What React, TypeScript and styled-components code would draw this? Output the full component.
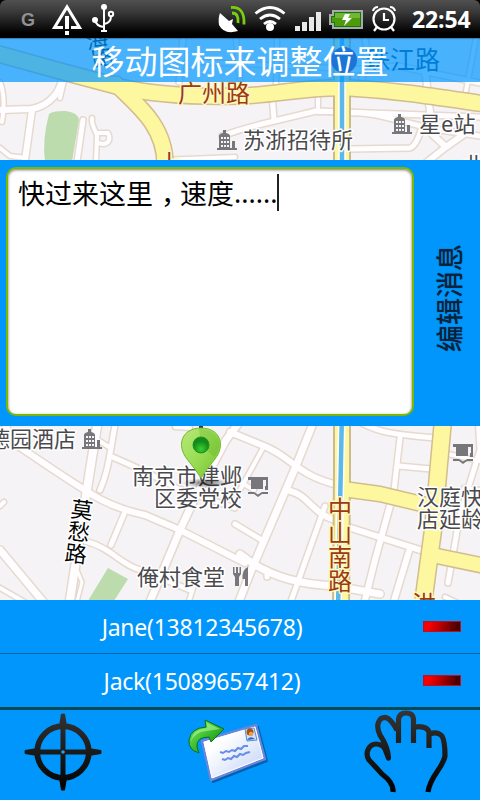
import React from 'react';
import styled, { createGlobalStyle } from 'styled-components';

const CJK = `"Noto Sans CJK SC", sans-serif`;
const LATIN = `"Noto Sans", "Noto Sans CJK SC", sans-serif`;

const GlobalStyle = createGlobalStyle`
  * { box-sizing: border-box; }
  body { margin: 0; background: #000; }
`;

const Screen = styled.div`
  display: flex;
  flex-direction: column;
  width: 480px;
  height: 800px;
  overflow: hidden;
  background: #000;
  font-family: ${LATIN};
`;

const StatusBar = styled.header`
  display: flex;
  align-items: center;
  flex: 0 0 38px;
  height: 38px;
  min-height: 0;
  border-radius: 6px 6px 0 0;
  background: linear-gradient(#505050 0, #3a3a3a 30%, #141414 68%, #000 88%);
`;

const Carrier = styled.span`
  width: 13px;
  margin-left: 21px;
  margin-right: 17px;
  padding-top: 2px;
  color: #929292;
  font: bold 18px/20px "Liberation Sans", sans-serif;
`;

const StatusIcon = styled.svg<{ $gap?: number }>`
  display: block;
  flex: none;
  margin-left: ${(p) => p.$gap ?? 0}px;
`;

const Clock = styled.time`
  margin-left: 15px;
  color: #fff;
  font: bold 23px/38px "Open Sans", sans-serif;
  letter-spacing: -0.1px;
`;

const Stage = styled.main`
  position: relative;
  display: flex;
  flex-direction: column;
  flex: 0 0 562px;
`;

const MapCanvas = styled.svg`
  position: absolute;
  inset: 0;
`;

const Title = styled.h1`
  position: relative;
  flex: 0 0 44px;
  height: 44px;
  margin: 0 0 78px;
  background: rgba(0, 150, 255, 0.7);
  box-shadow: inset 0 2px 1px -1px rgba(0, 30, 60, 0.35);
  color: #fff;
  font: 400 33px/44px ${CJK};
  text-align: center;
`;

const Composer = styled.section`
  position: relative;
  display: flex;
  flex: 0 0 266px;
  padding: 7px 0 10px 6px;
  background: #0096fb;
`;

const MessageBox = styled.div`
  display: flex;
  align-items: flex-start;
  width: 408px;
  padding: 5px 0 0 10px;
  border: 2px solid #7cb800;
  border-radius: 10px;
  background: #fff;
  box-shadow: inset 0 1px 3px rgba(0, 0, 0, 0.55);
  color: #000;
  font: 27px/37px ${CJK};
  white-space: nowrap;
`;

const CenteredComma = styled.span`
  width: 27px;
  text-indent: 8px;
  overflow: hidden;
`;

const Dots = styled.span`
  font-family: "Noto Sans", sans-serif;
`;

const Caret = styled.i`
  width: 2px;
  height: 37px;
  background: #222;
`;

const SideTab = styled.div`
  display: flex;
  align-items: center;
  justify-content: center;
  flex: 1;
  padding: 12px 0 0 4px;
`;

const SideLabel = styled.span`
  color: #07223a;
  font: 400 27px/34px ${CJK};
  text-shadow: 0 0 1px #07223a;
  writing-mode: vertical-rl;
  text-orientation: sideways;
  transform: rotate(180deg);
`;

const ContactList = styled.ul`
  flex: 0 0 107px;
  margin: 0;
  padding: 0;
  background: #0096fb;
  list-style: none;
`;

const ContactRow = styled.li`
  display: flex;
  align-items: center;
  height: 53px;
  padding-right: 19px;

  & + & {
    height: 54px;
    border-top: 1px solid #0664a5;
  }
`;

const ContactName = styled.span`
  width: 404px;
  color: #fff;
  font-size: 23px;
  line-height: 32px;
  letter-spacing: -0.25px;
  text-align: center;
`;

const RemoveButton = styled.button`
  width: 38px;
  height: 11px;
  margin-left: auto;
  padding: 0;
  border: 1px solid #b8102c;
  background: linear-gradient(105deg, #f80000 15%, #ba0000 45%, #4c0000 88%);
`;

const Toolbar = styled.nav`
  display: flex;
  justify-content: space-between;
  flex: 0 0 93px;
  border-top: 3px solid #034856;
  background: #0096fb;
`;

const ToolButton = styled.button`
  display: block;
  width: 130px;
  height: 90px;
  padding: 0;
  border: 0;
  background: none;
`;

const PlaceName = styled.text`
  fill: #4a4a4d;
  stroke: #fff;
  stroke-width: 3px;
  paint-order: stroke;
  stroke-linejoin: round;
  font: 22px ${CJK};
`;

const StreetName = styled(PlaceName)`
  fill: #9c3a12;
  stroke: #fff8c0;
  font-size: 24px;
`;

const MinorStreetName = styled(PlaceName)`
  fill: #050505;
  font-size: 22px;
`;

const VeiledName = styled(PlaceName)`
  fill: #00457c;
  stroke: none;
  font-size: 25px;
`;

type Road = { d: string; w?: number };

const lanes: Road[] = [
  // north of the message panel
  { d: 'M62 80 C58 98 44 107 31 109 L0 110' },
  { d: 'M32 110 L25 160' },
  { d: 'M0 82 C5 95 4 108 2 122', w: 4 },
  { d: 'M0 148 L10 156 L26 158', w: 4 },
  { d: 'M60 98 L66 72', w: 4 },
  { d: 'M83 120 L77 162', w: 5 },
  { d: 'M92 118 C91 126 96 130 97 136 L96 162 M97 133 L108 133 Q112 142 104 144 L97 143', w: 4 },
  { d: 'M183 38 L179 82', w: 5 },
  { d: 'M162 160 L235 157', w: 4 },
  { d: 'M222 136 Q238 130 262 124 L316 111 L480 117', w: 5 },
  { d: 'M272 94 L274 120', w: 5 },
  { d: 'M318 97 L318 112 L340 112', w: 4 },
  { d: 'M350 113 C375 111 405 124 440 130 L480 136', w: 5 },
  { d: 'M424 60 L430 112', w: 6 },
  { d: 'M350 149 L410 148 Q416 146 421 130 L430 117', w: 5 },
  { d: 'M432 134 L446 147 L470 130 M446 147 L427 162', w: 6 },
  { d: 'M365 38 C368 55 368 65 362 78', w: 5 },
  { d: 'M350 70 L398 66 L480 83', w: 5 },
  { d: 'M476 38 L466 91', w: 4 },
  { d: 'M200 62 L330 68 M236 40 L240 80 M277 40 L276 84', w: 4 },
  // south of the message panel
  { d: 'M0 415 L15 444 C35 457 60 475 88 492 Q112 508 145 515 L180 530 L245 563' },
  { d: 'M98 420 L87 489 L70 600', w: 8 },
  { d: 'M116 420 C110 450 109 470 100 490', w: 5 },
  { d: 'M98 440 L109 447', w: 4 },
  { d: 'M110 456 C136 467 152 474 176 488 L235 508', w: 5 },
  { d: 'M124 514 L111 545', w: 5 },
  { d: 'M85 541 C112 548 122 566 141 570 L190 590', w: 5 },
  { d: 'M244 416 L226 440 L194 500 L180 530 L149 604', w: 7 },
  { d: 'M0 550 L45 604', w: 7 },
  { d: 'M0 588 L28 604', w: 4 },
  { d: 'M0 506 L4 502', w: 4 },
  { d: 'M77 570 L82 582 L77 602', w: 3 },
  { d: 'M175 427 L190 428', w: 4 },
  { d: 'M188 604 L195 582', w: 4 },
  { d: 'M230 432 L264 446 C292 457 296 475 338 485', w: 6 },
  { d: 'M316 416 L296 466 L251 571 L238 604', w: 7 },
  { d: 'M264 446 L240 490 M240 482 L254 490', w: 4 },
  { d: 'M290 491 C308 495 313 514 335 520 L351 528 L420 550', w: 6 },
  { d: 'M325 506 L290 604', w: 5 },
  { d: 'M235 524 L260 539', w: 5 },
  { d: 'M240 554 L255 565 C275 576 295 584 335 586 L380 594', w: 7 },
  { d: 'M267 570 L267 577', w: 5 },
  { d: 'M352 418 C375 431 385 434 436 438', w: 5 },
  { d: 'M400 438 L394 490', w: 5 },
  { d: 'M399 466 L431 469', w: 5 },
  { d: 'M391 502 L375 560 L364 604', w: 6 },
  { d: 'M409 551 L393 604', w: 6 },
  { d: 'M448 454 L480 461', w: 4 },
  { d: 'M478 416 L480 450 L460 514 L448 583', w: 5 },
  { d: 'M464 488 L480 490', w: 4 },
  { d: 'M445 597 L460 604', w: 4 },
];

const avenues: Road[] = [
  { d: 'M-5 53 L60 71 L120 87 C155 95 200 97 240 96 C275 95 310 86 350 88 C400 91 430 96 485 104', w: 15 },
  { d: 'M116 84 C136 104 165 125 165 164', w: 15 },
  { d: 'M343 489 L380 494 L426 505', w: 14 },
  { d: 'M432 555 L485 566', w: 14 },
  { d: 'M443 420 L433 530 L423 604', w: 16 },
];

const Hotel = ({ x, y }: { x: number; y: number }) => (
  <g transform={`translate(${x} ${y})`}>
    <path d="M0 18h20v2H0z M2 6q0-2 4-3V0h3v3q4 1 4 3v13H2z M15 11h3v8h-3z" fill="#77777b" />
    <path d="M4 7h2v2H4z M7 7h2v2H7z M10 7h2v2h-2z M4 11h2v2H4z M7 11h2v2H7z M10 11h2v2h-2z M4 15h2v2H4z M7 15h2v2H7z M10 15h2v2h-2z" fill="#f7f4f8" />
  </g>
);

const School = ({ x, y }: { x: number; y: number }) => (
  <g transform={`translate(${x} ${y})`}>
    <path d="M0 0h20v3H0z M18 2h2v10h-2z M17 9h3v4h-3z M0 15h6l4 2.500 4-2.500h6v2h-6l-4 3-4-3H0z" fill="#77777b" />
    <path d="M3 3h12v9H3z" fill="#77777b" />
  </g>
);

const Fork = ({ x, y }: { x: number; y: number }) => (
  <path
    transform={`translate(${x} ${y})`}
    d="M0 0h1.500v6H3V0h2v6h1.500V0H8v7L6 10v9H2v-9L0 7z M15 0v19h-3v-7H9.500Q9 2 15 0z"
    fill="#77777b"
  />
);

const CityMap = () => (
  <MapCanvas width="480" height="562" viewBox="0 38 480 562">
    <defs>
      <linearGradient id="pin" x1="0" y1="0" x2="1" y2="1">
        <stop offset="0" stopColor="#b9e87a" />
        <stop offset="0.5" stopColor="#9add55" />
        <stop offset="1" stopColor="#74c02c" />
      </linearGradient>
      <radialGradient id="pinHole" cy="0.75">
        <stop offset="0" stopColor="#3ed02c" />
        <stop offset="1" stopColor="#128a1c" />
      </radialGradient>
      <radialGradient id="pinShade">
        <stop offset="0" stopColor="#000" stopOpacity="0.55" />
        <stop offset="1" stopColor="#000" stopOpacity="0" />
      </radialGradient>
    </defs>
    <rect y="38" width="480" height="562" fill="#f6f3f7" />
    <path d="M49 114 Q52 111 64 111 Q78 112 79 120 L72 162 H45 Q42 140 49 114z" fill="#bddcae" />
    <path d="M108 568 L128 579 L112 604 H86z" fill="#bddcae" />
    <path d="M0 585 Q15 592 25 602" fill="none" stroke="#86a4c4" strokeDasharray="1 1" />
    <g fill="none" strokeLinecap="round" strokeLinejoin="round">
      {lanes.map((r, i) => <path key={i} d={r.d} stroke="#e5dacd" strokeWidth={(r.w ?? 6) + 3} />)}
      {lanes.map((r, i) => <path key={i} d={r.d} stroke="#fffdff" strokeWidth={r.w ?? 6} />)}
      {avenues.map((r, i) => <path key={i} d={r.d} stroke="#d2bd8c" strokeWidth={(r.w ?? 14) + 3} />)}
      <path d="M342 30 V470 L341 610" stroke="#cdbb8e" strokeWidth="18" />
      {avenues.map((r, i) => <path key={i} d={r.d} stroke="#fdf7a0" strokeWidth={r.w} />)}
      <path d="M342 30 V470 L341 610" stroke="#fdf7a0" strokeWidth="14" />
      <path d="M342 30 V410 L338 610" stroke="#fff" strokeWidth="7.500" />
      <path d="M342 30 V410 L338 610" stroke="#5bb8e8" strokeWidth="4.500" />
    </g>
    <MinorStreetName x="86" y="48" transform="rotate(-8 97 40)">海</MinorStreetName>
    <MinorStreetName x="92" y="66" transform="rotate(-12 102 60)">路</MinorStreetName>
    <circle cx="344" cy="60" r="13" fill="#5b2a7c" />
    <VeiledName x="365" y="69">珠江路</VeiledName>
    <StreetName x="178" y="102">广州路</StreetName>
    <StreetName x="158" y="172">上</StreetName>
    <Hotel x={217} y={130} />
    <PlaceName x="243" y="148">苏浙招待所</PlaceName>
    <Hotel x={392} y={114} />
    <PlaceName x="419" y="132">星<tspan fontFamily="Noto Sans">e</tspan>站</PlaceName>
    <PlaceName x="463" y="173">北</PlaceName>
    <PlaceName x="-12" y="447">德园酒店</PlaceName>
    <Hotel x={82} y={429} />
    <PlaceName x="132" y="484">南京市建邺</PlaceName>
    <PlaceName x="154" y="506">区委党校</PlaceName>
    <School x={248} y={477} />
    <School x={453} y={444} />
    <PlaceName x="417" y="505">汉庭快捷</PlaceName>
    <PlaceName x="417" y="527">店延龄</PlaceName>
    <PlaceName x="137" y="585">俺村食堂</PlaceName>
    <Fork x={233} y={567} />
    <MinorStreetName x="71" y="518" transform="rotate(7 82 510)">莫</MinorStreetName>
    <MinorStreetName x="68" y="540" transform="rotate(7 79 532)">愁</MinorStreetName>
    <MinorStreetName x="65" y="562" transform="rotate(7 76 554)">路</MinorStreetName>
    {['中', '山', '南', '路'].map((c, i) => (
      <StreetName key={c} x="328" y={518 + i * 24}>{c}</StreetName>
    ))}
    <StreetName x="412" y="613">洪</StreetName>
    <ellipse cx="206" cy="483" rx="24" ry="5" fill="url(#pinShade)" />
    <rect x="199" y="426" width="4" height="3" fill="#333" />
    <path d="M201 478 Q196 470 187 459 C176 445 182 428 201 428 C220 428 226 445 215 459 Q206 470 201 478z" fill="url(#pin)" stroke="#6fba2c" />
    <path d="M199 429 L201 445 L214 457 C225 444 218 429 199 429z" fill="#55a81a" opacity="0.25" />
    <circle cx="201" cy="445" r="8" fill="url(#pinHole)" stroke="#1c9222" />
  </MapCanvas>
);

const TargetIcon = () => (
  <svg width="130" height="90" viewBox="0 710 130 90">
    <defs>
      <linearGradient id="ink" gradientUnits="userSpaceOnUse" x1="0" y1="710" x2="0" y2="792">
        <stop offset="0" stopColor="#363636" />
        <stop offset="1" stopColor="#000" />
      </linearGradient>
    </defs>
    <circle cx="63" cy="752" r="25.800" fill="none" stroke="url(#ink)" strokeWidth="5.800" />
    <path d="M60.500 726h5v52h-5z M37 749.500h52v5H37z" fill="url(#ink)" />
    <path d="M61 714q2-1 4 0l2 12h-8z M61 790q2 1 4 0l2-12h-8z M25 750q-1 2 0 4l12 2v-8z M101 750q1 2 0 4l-12 2v-8z" fill="url(#ink)" />
    <circle cx="63" cy="752" r="1.800" fill="#299ee5" />
  </svg>
);

const MailIcon = () => (
  <svg width="130" height="90" viewBox="175 710 130 90">
    <defs>
      <linearGradient id="paper" x1="0" y1="0" x2="1" y2="1">
        <stop offset="0.3" stopColor="#fff" />
        <stop offset="1" stopColor="#bbcef6" />
      </linearGradient>
      <linearGradient id="arrow" x1="0" y1="0" x2="1" y2="1">
        <stop offset="0" stopColor="#8df06d" />
        <stop offset="0.5" stopColor="#3bbb2d" />
        <stop offset="1" stopColor="#087812" />
      </linearGradient>
    </defs>
    <path d="M204 742 L258 727 L267 761 L213 782z" fill="#034a90" opacity="0.7" stroke="#034a90" strokeLinejoin="round" strokeWidth="2" />
    <path d="M202 741 L256 725 L265 759 L211 780z" fill="url(#paper)" stroke="#6787dc" strokeWidth="2.500" strokeLinejoin="round" />
    <path d="M204 742 L255 727 L263 758 L212 778z" fill="none" stroke="#fff" strokeWidth="1" />
    <path d="M245 729 l9-1 3 12-10 1z" fill="#d2e1fa" stroke="#5a88d4" />
    <circle cx="250" cy="732" r="3.500" fill="#a85412" />
    <circle cx="251" cy="734" r="2.200" fill="#f0a040" />
    <path d="M247 740 q3-5 8-1z" fill="#2364c4" />
    <path d="M220 752l3 1 3-2 3 1 3-2 3 1 3-3 3 1 3-3 4 0 M222 759l3 1 3-2 3 1 3-3 3 1 3-3 3 1 3-2 4-1" fill="none" stroke="#668de8" strokeWidth="2" />
    <path d="M205 720 L224 729 L211 742 L209 737 Q196 737 197 747 L199 753 Q188 750 189 740 Q191 728 206 727z" fill="url(#arrow)" stroke="#087018" strokeLinejoin="round" />
    <path d="M206.500 722.500 L220 729 L207 731 Q194 732 191 742 Q192 729 207 728z" fill="#a4f58d" opacity="0.65" />
  </svg>
);

const HandIcon = () => (
  <svg width="130" height="90" viewBox="350 710 130 90">
    <path
      d="M393 792 Q394 783 382 774 Q372 763 369 760 C364 752 370 744 376 744 Q382 744 385 749 L388.500 758 Q388 747 380 735 C375 725 379 717 386 717.500 Q391 719 397 730 M398.500 743 V720 Q399 713 406 713 Q413 713 413.500 719 V743 M413.500 728 C418 725 429 727 429 733 V748 M430 734 Q437 731 442 736 Q445 741 445 756 C443 768 430 776 428 792"
      fill="none"
      stroke="url(#ink)"
      strokeWidth="5.200"
      strokeLinejoin="round"
    />
  </svg>
);

const contacts = ['Jane(13812345678)', 'Jack(15089657412)'];

export default function App() {
  return (
    <Screen>
      <GlobalStyle />
      <StatusBar>
        <Carrier>G</Carrier>
        <StatusIcon width="32" height="38" viewBox="51 0 32 38">
          <path d="M63 27.500H54.500L67 7L79.500 27.500H71" fill="none" stroke="#fff" strokeWidth="3" />
          <path d="M65 16h4v13h-4z M65 31h4v4h-4z" fill="#fff" />
        </StatusIcon>
        <StatusIcon width="24" height="38" viewBox="91 0 24 38" $gap={8}>
          <g fill="none" stroke="#fff" strokeWidth="2">
            <path d="M104 7v24 M95 20q1 6 9 7 M104 24q7-1 7-8" />
            <circle cx="111" cy="14" r="2.200" />
          </g>
          <circle cx="104" cy="7" r="3" fill="#fff" />
          <circle cx="95" cy="20" r="3" fill="#fff" />
          <path d="M101 30h6v2h-6z" fill="#fff" />
        </StatusIcon>
        <StatusIcon width="28" height="38" viewBox="218 0 28 38" $gap={103}>
          <path d="M220 13L229 21L233 19L232 24L238 31Q224 35 219 25Q218 18 220 13z" fill="#fff" />
          <path d="M232 13q7 0 6 10 M231 7.500q14-1 13 17" fill="none" stroke="#78cf0b" strokeWidth="2.800" />
        </StatusIcon>
        <StatusIcon width="32" height="38" viewBox="254 0 32 38" $gap={8}>
          <path d="M255.500 13.500q14.500-12 29 0 M260 19q10-8 20 0 M264 24q6-5 12 0" fill="none" stroke="#fff" strokeWidth="2.800" />
          <circle cx="270" cy="27" r="4" fill="#fff" />
        </StatusIcon>
        <StatusIcon width="27" height="38" viewBox="295 0 27 38" $gap={9}>
          <path d="M295 26h5v5h-5z M302 22h5v9h-5z M309 17h5v14h-5z M316 12h5v19h-5z" fill="#e8e8e8" />
        </StatusIcon>
        <StatusIcon width="34" height="38" viewBox="329 0 34 38" $gap={7}>
          <path d="M333 11h29v17h-29v-4h-3v-9h3z" fill="#171" stroke="#aaa" strokeWidth="2" />
          <path d="M335 13h25v13h-25v-4h-3v-5h3z" fill="#4f9a0b" />
          <path d="M335 13h25v5h-25z" fill="#74b436" />
          <path d="M345 14h5l-2 4h4l-8 8 2-6h-4z" fill="#fff" />
        </StatusIcon>
        <StatusIcon width="26" height="38" viewBox="371 0 26 38" $gap={8}>
          <g fill="none" stroke="#fff" strokeWidth="2.200">
            <circle cx="384" cy="19" r="10.500" />
            <path d="M384 13v7h5 M377 27l-3 4 M391 27l3 4 M373 11q1-4 5-4 M395 11q-1-4-5-4" />
          </g>
        </StatusIcon>
        <Clock>22:54</Clock>
      </StatusBar>
      <Stage>
        <CityMap />
        <Title>移动图标来调整位置</Title>
        <Composer>
          <MessageBox>
            快过来这里<CenteredComma>，</CenteredComma>速度<Dots>......</Dots>
            <Caret />
          </MessageBox>
          <SideTab>
            <SideLabel>编辑消息</SideLabel>
          </SideTab>
        </Composer>
      </Stage>
      <ContactList>
        {contacts.map((c) => (
          <ContactRow key={c}>
            <ContactName>{c}</ContactName>
            <RemoveButton aria-label={`Remove ${c}`} />
          </ContactRow>
        ))}
      </ContactList>
      <Toolbar>
        <ToolButton aria-label="Locate"><TargetIcon /></ToolButton>
        <ToolButton aria-label="Send"><MailIcon /></ToolButton>
        <ToolButton aria-label="Pan"><HandIcon /></ToolButton>
      </Toolbar>
    </Screen>
  );
}
